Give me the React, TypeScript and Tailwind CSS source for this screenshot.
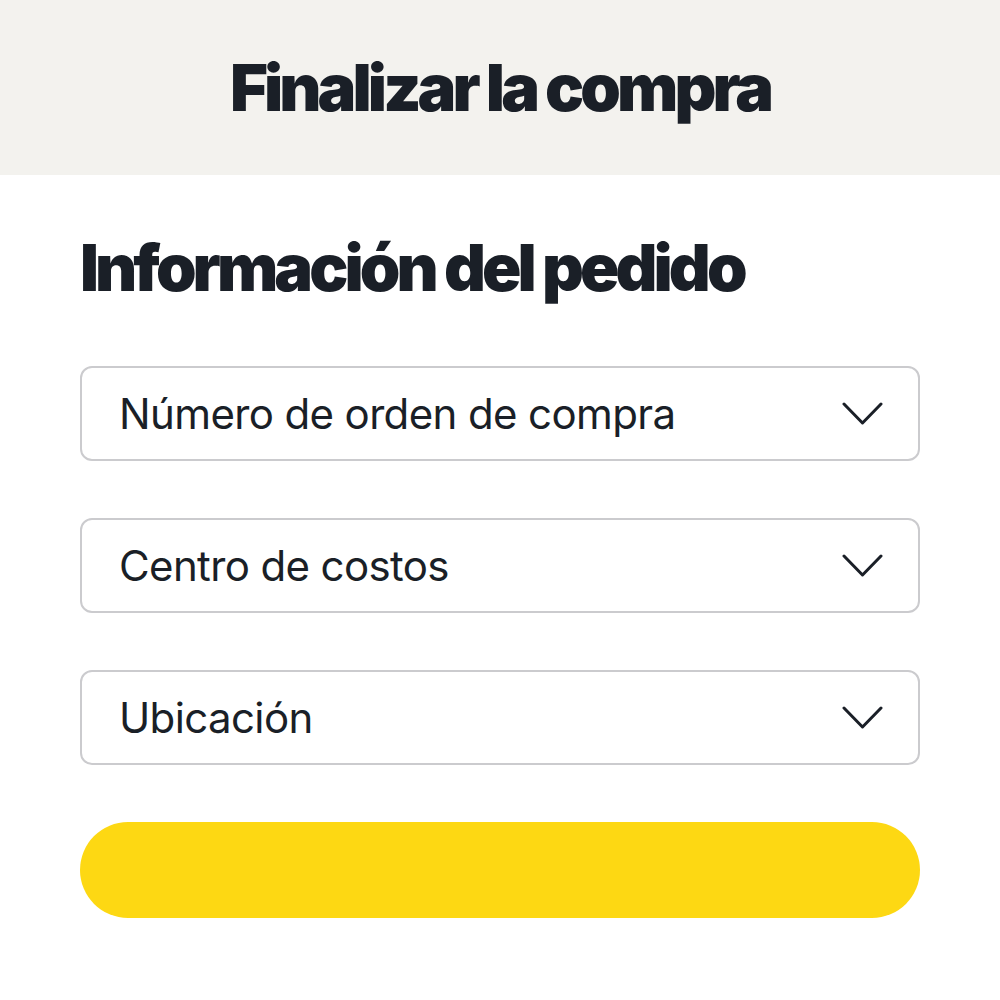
const fields = ['Número de orden de compra', 'Centro de costos', 'Ubicación'];

function Chevron() {
  return (
    <svg width="41" height="26" viewBox="0 0 41 26" fill="none" className="text-[#1a1f27]">
      <polyline
        points="2,3 20.5,22 39,3"
        stroke="currentColor"
        strokeWidth="3"
        strokeLinecap="round"
        strokeLinejoin="round"
      />
    </svg>
  );
}

function SelectField({ label }: { label: string }) {
  return (
    <button className="flex h-[95px] w-full items-center justify-between rounded-[12px] border-2 border-[#cbcbce] bg-white pl-[37px] pr-[35px] text-left">
      <span className="text-[42px] leading-none tracking-[-0.015em] text-[#1a1f27]">{label}</span>
      <Chevron />
    </button>
  );
}

export default function App() {
  return (
    <div className="min-h-[1000px] bg-white font-['Inter','Liberation_Sans',sans-serif]">
      <header className="flex h-[175px] items-center justify-center bg-[#f3f2ee]">
        <h1 className="text-[65px] font-black leading-none tracking-[-0.06em] text-[#1a1f27]">
          Finalizar la compra
        </h1>
      </header>
      <main className="px-[80px] pt-[60px]">
        <h2 className="text-[65px] font-black leading-none tracking-[-0.06em] text-[#1a1f27]">
          Información del pedido
        </h2>
        <div className="mt-[66px] flex flex-col gap-[57px]">
          {fields.map((f) => (
            <SelectField key={f} label={f} />
          ))}
          <button className="h-[96px] w-full rounded-full bg-[#fdd813]" />
        </div>
      </main>
    </div>
  );
}
